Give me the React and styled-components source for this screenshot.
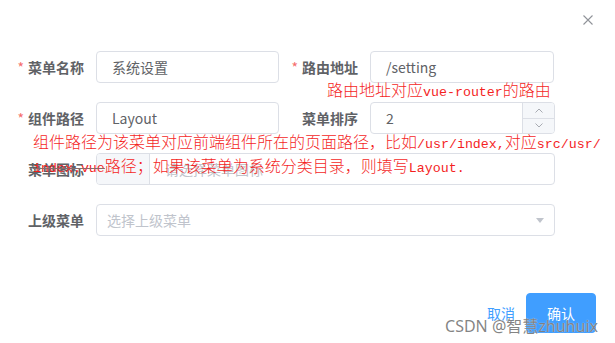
import React from "react";
import styled, { createGlobalStyle } from "styled-components";

const GlobalStyle = createGlobalStyle`
  html, body { margin: 0; padding: 0; background: #fff; }
  body { font-family: "Noto Sans CJK SC", "Noto Sans", sans-serif; }
  * { box-sizing: border-box; }
`;

const Page = styled.div`
  position: relative;
  width: 615px;
  height: 343px;
  overflow: hidden;
  background: #fff;
  display: flex;
  flex-direction: column;
`;

const Header = styled.div`
  height: 40px;
  display: flex;
  align-items: center;
  justify-content: flex-end;
  padding-right: 22px;
`;

const CloseBtn = styled.button`
  border: 0;
  background: none;
  padding: 0;
  width: 10px;
  height: 10px;
  display: flex;
  cursor: pointer;
`;

const Form = styled.div`
  display: flex;
  flex-direction: column;
  gap: 19px;
  padding: 11px 0 0 16px;
`;

const Row = styled.div`
  display: flex;
  gap: 11px;
`;

const Item = styled.div`
  display: flex;
  align-items: center;
`;

const Label = styled.label`
  width: 80px;
  padding-right: 12px;
  text-align: right;
  font-size: 14px;
  font-weight: 700;
  color: #606266;
  line-height: 32px;
  white-space: nowrap;
`;

const Star = styled.span`
  color: #f56c6c;
  margin-right: 4px;
  font-weight: 400;
`;

const Box = styled.div`
  width: ${(p) => p.$w}px;
  height: 32px;
  border: 1px solid #dcdfe6;
  border-radius: 4px;
  background: #fff;
  display: flex;
  align-items: center;
  overflow: hidden;
  font-size: 14px;
  color: #606266;
`;

const Value = styled.span`
  flex: 1;
  padding-left: ${(p) => p.$pad ?? 15}px;
  color: ${(p) => (p.$placeholder ? "#c0c4cc" : "#606266")};
  white-space: nowrap;
`;

const Controls = styled.div`
  width: 32px;
  height: 100%;
  display: flex;
  flex-direction: column;
  border-left: 1px solid #dcdfe6;
  background: #f5f7fa;
`;

const Step = styled.div`
  flex: 1;
  display: flex;
  align-items: center;
  justify-content: center;
  & + & { border-top: 1px solid #dcdfe6; }
`;

const Prepend = styled.div`
  width: 53px;
  height: 100%;
  background: #f5f7fa;
  border-right: 1px solid #dcdfe6;
`;

const Caret = styled.div`
  width: 0;
  height: 0;
  margin-right: 10px;
  border-left: 4px solid transparent;
  border-right: 4px solid transparent;
  border-top: 5px solid #c0c4cc;
`;

const Footer = styled.div`
  margin-top: auto;
  display: flex;
  justify-content: flex-end;
  align-items: center;
  padding: 0 19px 10px 0;
`;

const TextButton = styled.button`
  border: 0;
  background: none;
  padding: 0;
  margin-right: 11px;
  font-family: inherit;
  font-size: 14px;
  color: #409eff;
  cursor: pointer;
`;

const PrimaryButton = styled.button`
  width: 70px;
  height: 40px;
  border: 1px solid #409eff;
  border-radius: 4px;
  background: #409eff;
  color: #fff;
  font-family: inherit;
  font-size: 14px;
  cursor: pointer;
`;

const Note = styled.div`
  position: absolute;
  left: ${(p) => p.$x}px;
  top: ${(p) => p.$y}px;
  color: #f41f1f;
  font-size: 16px;
  line-height: 21px;
  font-weight: 300;
  white-space: nowrap;
  pointer-events: none;
`;

const Mono = styled.span`
  font-family: "Liberation Mono", monospace;
  font-size: 13.3px;
  text-decoration: ${(p) => (p.$strike ? "line-through" : "none")};
  text-decoration-color: #8a6a6a;
`;

const Watermark = styled.div`
  position: absolute;
  right: 17px;
  bottom: 7px;
  font-family: "Noto Sans", "Noto Sans CJK SC", sans-serif;
  font-size: 16px;
  line-height: 20px;
  color: rgba(110, 110, 110, 0.85);
  text-shadow: 0 0 1px rgba(255, 255, 255, 0.9);
  pointer-events: none;
`;

const Chevron = ({ up }) => (
  <svg width="8" height="5" viewBox="0 0 8 5">
    <path
      d={up ? "M0.5 4.5 L4 1 L7.5 4.5" : "M0.5 0.5 L4 4 L7.5 0.5"}
      fill="none"
      stroke="#a8abb2"
      strokeWidth="1"
    />
  </svg>
);

export default function App() {
  return (
    <>
      <GlobalStyle />
      <Page>
        <Header>
          <CloseBtn aria-label="close">
            <svg width="10" height="10" viewBox="0 0 10 10">
              <path d="M0.5 0.5 L9.5 9.5 M9.5 0.5 L0.5 9.5" stroke="#909399" strokeWidth="1.1" />
            </svg>
          </CloseBtn>
        </Header>
        <Form>
          <Row>
            <Item>
              <Label><Star>*</Star>菜单名称</Label>
              <Box $w={183}><Value>系统设置</Value></Box>
            </Item>
            <Item>
              <Label><Star>*</Star>路由地址</Label>
              <Box $w={184}><Value>/setting</Value></Box>
            </Item>
          </Row>
          <Row>
            <Item>
              <Label><Star>*</Star>组件路径</Label>
              <Box $w={183}><Value>Layout</Value></Box>
            </Item>
            <Item>
              <Label>菜单排序</Label>
              <Box $w={185}>
                <Value>2</Value>
                <Controls>
                  <Step><Chevron up /></Step>
                  <Step><Chevron /></Step>
                </Controls>
              </Box>
            </Item>
          </Row>
          <Row>
            <Item>
              <Label>菜单图标</Label>
              <Box $w={459}>
                <Prepend />
                <Value $placeholder>请选择菜单图标</Value>
              </Box>
            </Item>
          </Row>
          <Row>
            <Item>
              <Label>上级菜单</Label>
              <Box $w={459}>
                <Value $placeholder $pad={10}>选择上级菜单</Value>
                <Caret />
              </Box>
            </Item>
          </Row>
        </Form>
        <Footer>
          <TextButton>取消</TextButton>
          <PrimaryButton>确认</PrimaryButton>
        </Footer>
        <Note $x={327} $y={79}>
          路由地址对应<Mono>vue-router</Mono>的路由
        </Note>
        <Note $x={33} $y={131}>
          组件路径为该菜单对应前端组件所在的页面路径，比如<Mono>/usr/index,</Mono>对应<Mono>src/usr/</Mono>
          <br />
          <Mono $strike>index.vue</Mono>路径；如果该菜单为系统分类目录，则填写<Mono>Layout.</Mono>
        </Note>
        <Watermark>CSDN @智慧zhuhuix</Watermark>
      </Page>
    </>
  );
}
